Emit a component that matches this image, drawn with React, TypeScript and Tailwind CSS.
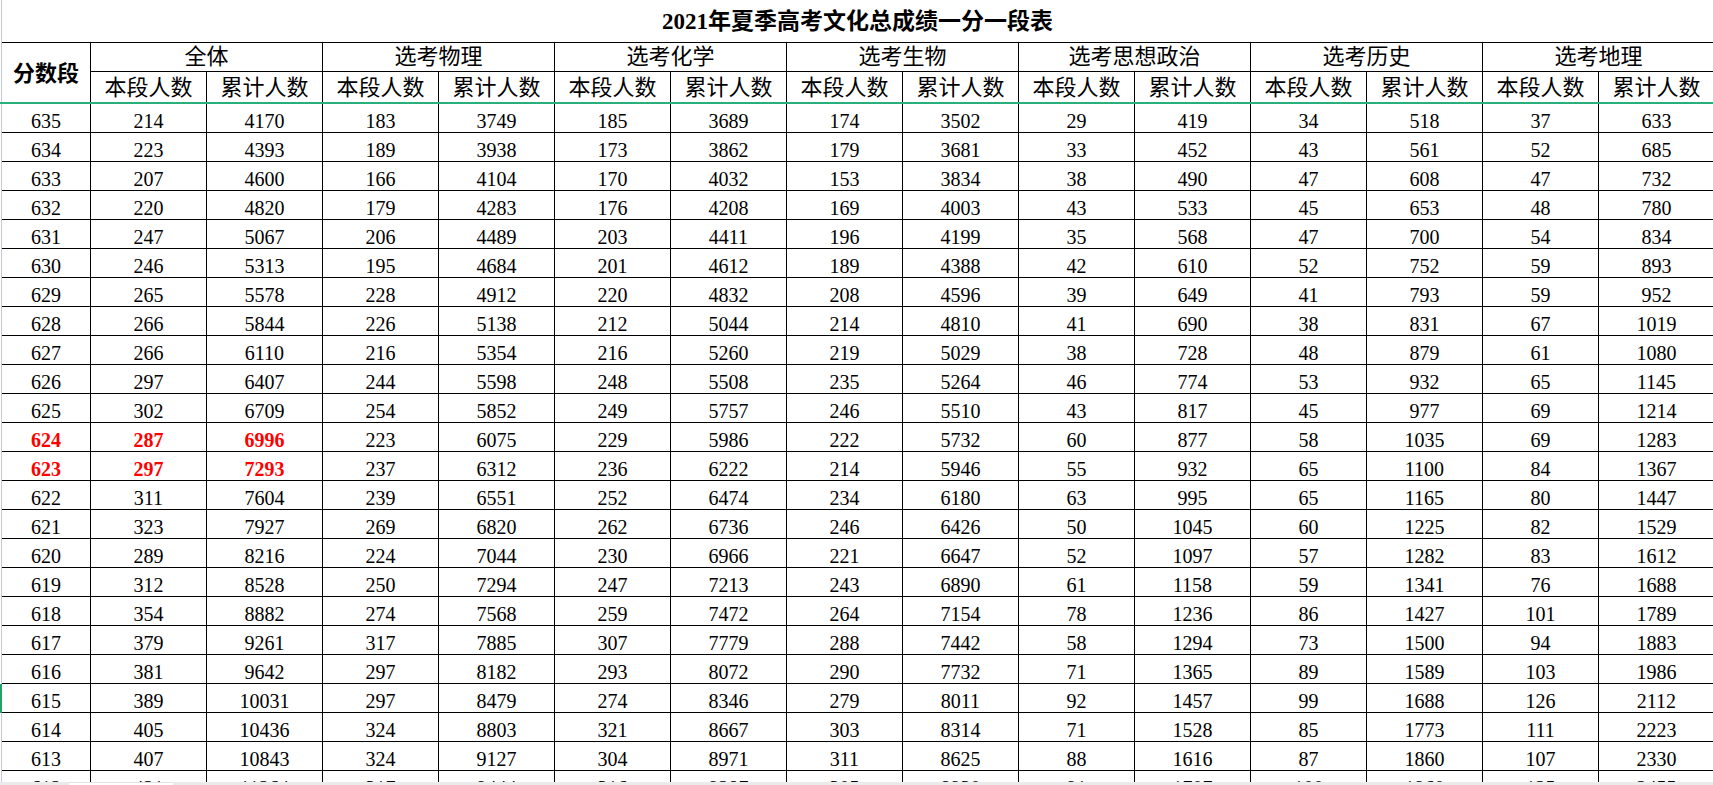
import React from "react";

const rows: number[][] = [
  [635, 214, 4170, 183, 3749, 185, 3689, 174, 3502, 29, 419, 34, 518, 37, 633],
  [634, 223, 4393, 189, 3938, 173, 3862, 179, 3681, 33, 452, 43, 561, 52, 685],
  [633, 207, 4600, 166, 4104, 170, 4032, 153, 3834, 38, 490, 47, 608, 47, 732],
  [632, 220, 4820, 179, 4283, 176, 4208, 169, 4003, 43, 533, 45, 653, 48, 780],
  [631, 247, 5067, 206, 4489, 203, 4411, 196, 4199, 35, 568, 47, 700, 54, 834],
  [630, 246, 5313, 195, 4684, 201, 4612, 189, 4388, 42, 610, 52, 752, 59, 893],
  [629, 265, 5578, 228, 4912, 220, 4832, 208, 4596, 39, 649, 41, 793, 59, 952],
  [628, 266, 5844, 226, 5138, 212, 5044, 214, 4810, 41, 690, 38, 831, 67, 1019],
  [627, 266, 6110, 216, 5354, 216, 5260, 219, 5029, 38, 728, 48, 879, 61, 1080],
  [626, 297, 6407, 244, 5598, 248, 5508, 235, 5264, 46, 774, 53, 932, 65, 1145],
  [625, 302, 6709, 254, 5852, 249, 5757, 246, 5510, 43, 817, 45, 977, 69, 1214],
  [624, 287, 6996, 223, 6075, 229, 5986, 222, 5732, 60, 877, 58, 1035, 69, 1283],
  [623, 297, 7293, 237, 6312, 236, 6222, 214, 5946, 55, 932, 65, 1100, 84, 1367],
  [622, 311, 7604, 239, 6551, 252, 6474, 234, 6180, 63, 995, 65, 1165, 80, 1447],
  [621, 323, 7927, 269, 6820, 262, 6736, 246, 6426, 50, 1045, 60, 1225, 82, 1529],
  [620, 289, 8216, 224, 7044, 230, 6966, 221, 6647, 52, 1097, 57, 1282, 83, 1612],
  [619, 312, 8528, 250, 7294, 247, 7213, 243, 6890, 61, 1158, 59, 1341, 76, 1688],
  [618, 354, 8882, 274, 7568, 259, 7472, 264, 7154, 78, 1236, 86, 1427, 101, 1789],
  [617, 379, 9261, 317, 7885, 307, 7779, 288, 7442, 58, 1294, 73, 1500, 94, 1883],
  [616, 381, 9642, 297, 8182, 293, 8072, 290, 7732, 71, 1365, 89, 1589, 103, 1986],
  [615, 389, 10031, 297, 8479, 274, 8346, 279, 8011, 92, 1457, 99, 1688, 126, 2112],
  [614, 405, 10436, 324, 8803, 321, 8667, 303, 8314, 71, 1528, 85, 1773, 111, 2223],
  [613, 407, 10843, 324, 9127, 304, 8971, 311, 8625, 88, 1616, 87, 1860, 107, 2330],
  [612, 421, 11264, 317, 9444, 316, 9287, 305, 8930, 91, 1707, 100, 1960, 125, 2455],
];

const groups = ["全体", "选考物理", "选考化学", "选考生物", "选考思想政治", "选考历史", "选考地理"];

const serif = { fontFamily: '"Liberation Serif", "Noto Sans CJK SC", serif' };
const cjk = { fontFamily: '"Liberation Serif", "Noto Sans CJK SC", sans-serif' };

function Strip({ green = false }: { green?: boolean }) {
  return green ? (
    <div className="w-[2px] shrink-0 bg-[#21a366]" />
  ) : (
    <div className="w-[2px] shrink-0 border-l border-white bg-[#c5c8d6]" />
  );
}

export default function App() {
  return (
    <div className="w-[1713px] h-[785px] overflow-hidden bg-white flex flex-col text-black" style={serif}>
      <div className="flex-1 min-h-0 overflow-hidden">
        {/* title row */}
        <div className="flex h-[43px]">
          <Strip />
          <div
            className="flex-1 border-b border-black flex items-center justify-center text-[23px] font-bold leading-none"
            style={cjk}
          >
            2021年夏季高考文化总成绩一分一段表
          </div>
        </div>
        {/* header */}
        <div className="grid grid-cols-[2px_89px_repeat(14,116px)] grid-rows-[29px_30px]" style={cjk}>
          <div className="row-span-2 border-l border-white bg-[#c5c8d6]" />
          <div className="row-span-2 border-r border-black flex items-center justify-center text-[22px] font-bold leading-none pt-[2px]">
            分数段
          </div>
          {groups.map((g) => (
            <div
              key={g}
              className="col-span-2 border-r border-b border-black flex items-center justify-center text-[22px] leading-none"
            >
              {g}
            </div>
          ))}
          {groups.map((g) => (
            <React.Fragment key={g + "s"}>
              <div className="border-r border-black flex items-center justify-center text-[22px] leading-none pt-[1px]">
                本段人数
              </div>
              <div className="border-r border-black flex items-center justify-center text-[22px] leading-none pt-[1px]">
                累计人数
              </div>
            </React.Fragment>
          ))}
        </div>
        <div className="h-[2px] bg-[#27b07c]" />
        {/* data rows */}
        {rows.map((r) => {
          const red = r[0] === 624 || r[0] === 623;
          return (
            <div key={r[0]} className="flex h-[29px]">
              <Strip green={r[0] === 615} />
              {r.map((v, i) => (
                <div
                  key={i}
                  className={
                    (i === 0 ? "w-[89px] " : "w-[116px] ") +
                    "shrink-0 border-r border-b border-black flex items-center justify-center text-[20px] leading-none pt-[5px] " +
                    (red && i < 3 ? "text-[#ff0000] font-bold" : "")
                  }
                >
                  {v}
                </div>
              ))}
            </div>
          );
        })}
      </div>
      {/* bottom scrollbar strip */}
      <div className="h-[3px] flex shrink-0">
        <div className="w-[69px] bg-[#ebebeb]" />
        <div className="w-[104px] bg-white border-t border-[#e2e2e2]" />
        <div className="flex-1 bg-[#ebebeb]" />
      </div>
    </div>
  );
}
